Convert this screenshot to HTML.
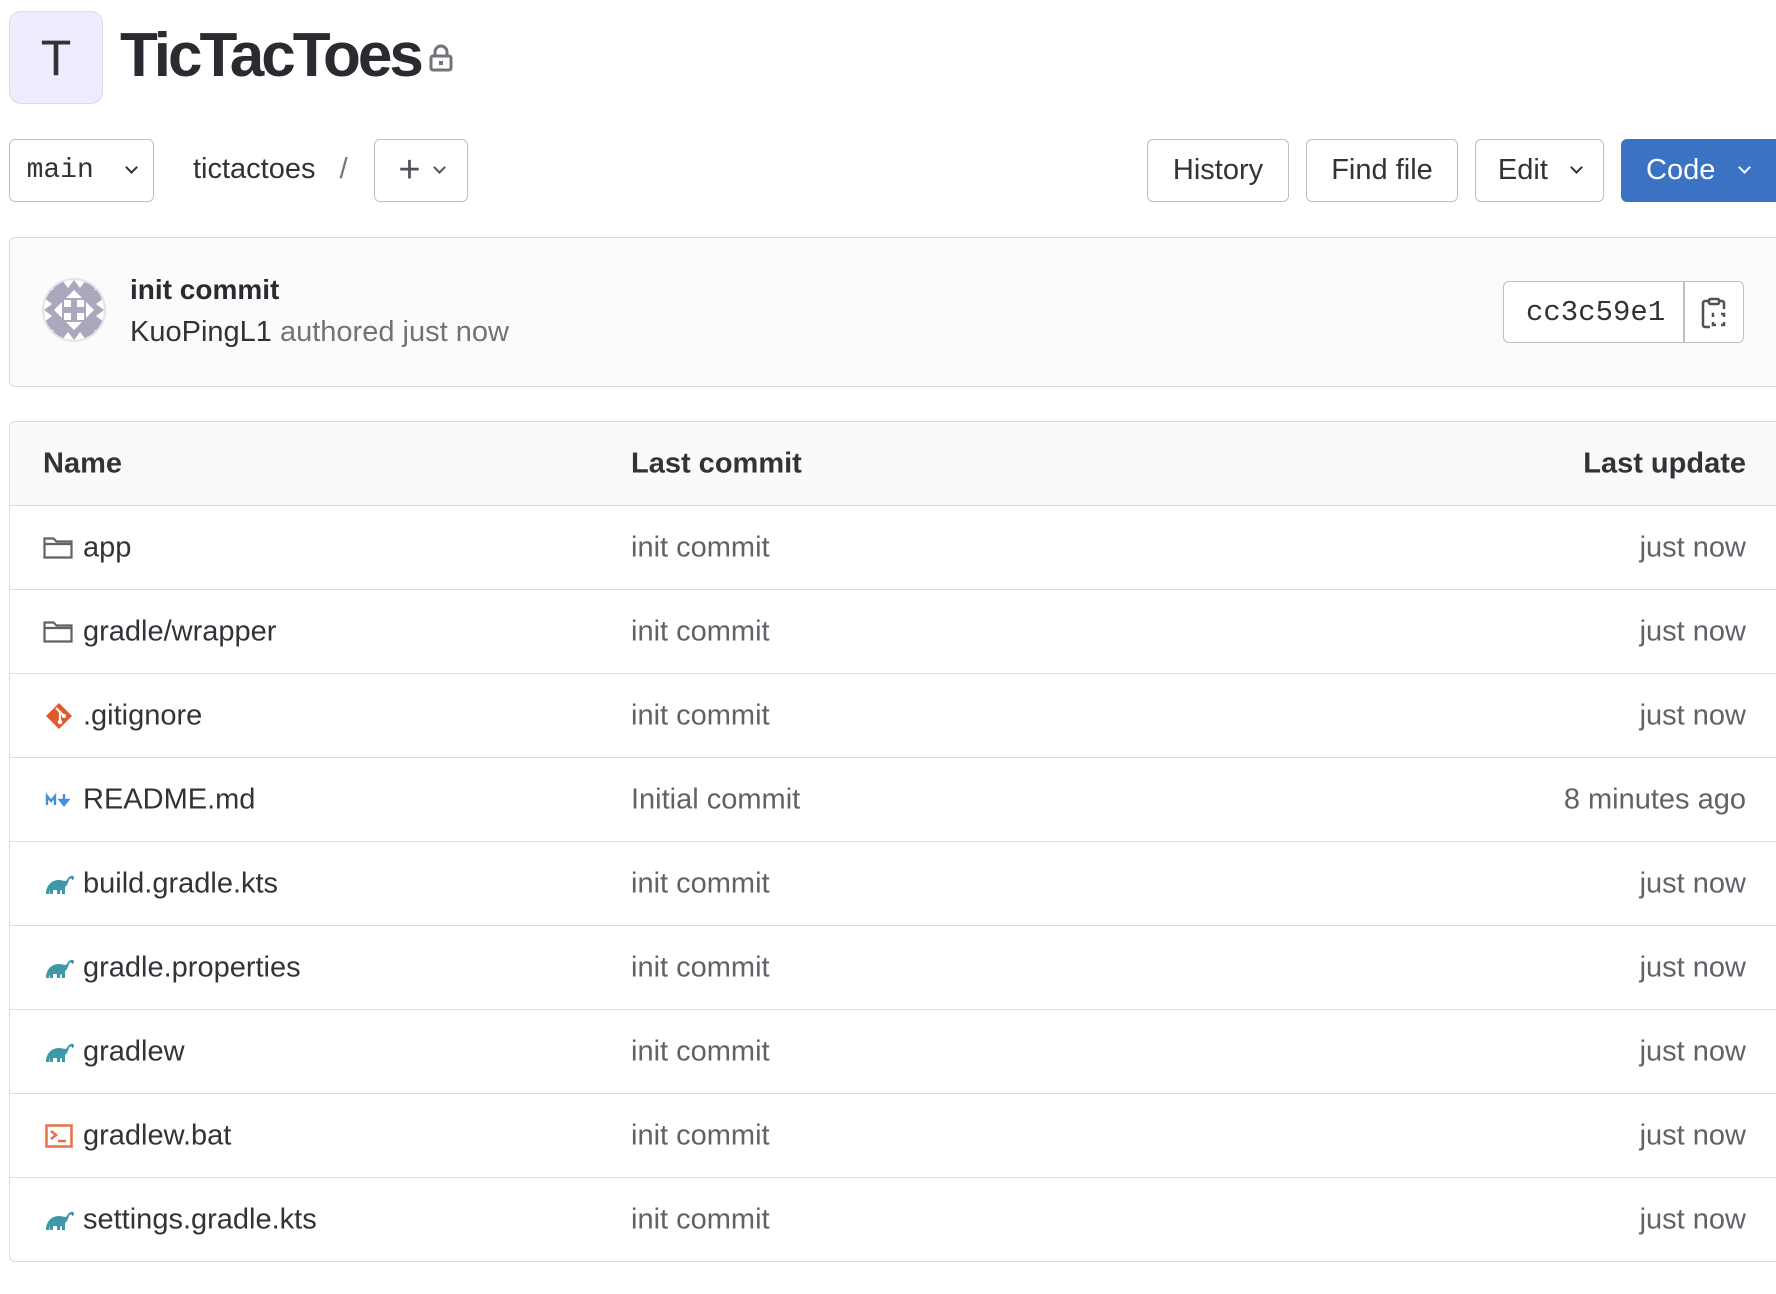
<!DOCTYPE html>
<html><head><meta charset="utf-8"><style>
*{box-sizing:border-box;margin:0;padding:0}
body{width:1776px;height:1294px;background:#fff;font-family:"Liberation Sans",sans-serif;color:#333238;position:relative;overflow:hidden}
.abs{position:absolute}
.btn{position:absolute;top:139px;height:63px;border:1.5px solid #bfbfc3;border-radius:6px;background:#fff;font-size:29px;display:flex;align-items:center;justify-content:center;color:#333238}
.chev{display:inline-block;width:10px;height:10px;border-right:2px solid currentColor;border-bottom:2px solid currentColor;transform:rotate(45deg);margin-top:-6px}
.table{position:absolute;left:9px;top:421px;width:1800px;border:1.5px solid #dcdcde;border-radius:6px;overflow:hidden}
.row{height:84px;border-top:1.5px solid #dcdcde;position:relative;font-size:29px}
.row.h{border-top:none;height:83px;background:#fafafb;font-weight:bold}
.row span{position:absolute;top:50%;transform:translateY(-50%)}
.n{left:73px;color:#333238}
.c{left:621px;color:#626168}
.u{left:1180px;width:556px;text-align:right;color:#626168}
.h .n{left:33px}.h .c,.h .u{color:#333238}
.ic{position:absolute;left:33px;top:50%;transform:translateY(-50%)}
</style></head><body>
<div class="abs" style="left:9px;top:11px;width:94px;height:93px;background:#eeedfd;border:1.5px solid #dcdaf3;border-radius:12px;font-size:50px;display:flex;align-items:center;justify-content:center;color:#333238">T</div>
<div class="abs" style="left:120px;top:20px;font-size:62px;font-weight:bold;letter-spacing:-3px;color:#2b2a30">TicTacToes</div>
<svg class="abs" style="left:428px;top:44px" width="26" height="28" viewBox="0 0 26 28"><rect x="3" y="12" width="20" height="14" rx="2" fill="none" stroke="#737278" stroke-width="3"/><path d="M7 12V8a6 6 0 0 1 12 0v4" fill="none" stroke="#737278" stroke-width="3"/><rect x="11" y="17" width="4" height="4" fill="#737278"/></svg>

<div class="btn" style="left:9px;width:145px;font-family:'Liberation Mono',monospace;font-size:28px">main&nbsp;&nbsp;<span class="chev" style="width:9px;height:9px"></span></div>
<div class="abs" style="left:193px;top:153px;font-size:29px">tictactoes&nbsp;&nbsp;&nbsp;<span style="color:#737278">/</span></div>
<div class="btn" style="left:374px;width:94px;color:#535158"><span style="font-size:38px;font-weight:300;margin-right:14px">+</span><span class="chev" style="width:9px;height:9px"></span></div>

<div class="btn" style="left:1147px;width:142px">History</div>
<div class="btn" style="left:1306px;width:152px">Find file</div>
<div class="btn" style="left:1475px;width:129px">Edit&nbsp;&nbsp;&nbsp;<span class="chev" style="width:9px;height:9px"></span></div>
<div class="btn" style="left:1621px;width:170px;background:#3b72c4;border-color:#3b72c4;color:#fff;justify-content:flex-start;padding-left:24px">Code&nbsp;&nbsp;&nbsp;<span class="chev" style="width:9px;height:9px"></span></div>

<div class="abs" style="left:9px;top:237px;width:1800px;height:150px;background:#fbfbfc;border:1.5px solid #dcdcde;border-radius:6px"></div>
<svg class="abs" style="left:42px;top:278px" width="64" height="64" viewBox="0 0 64 64"><defs><clipPath id="cc"><circle cx="32" cy="32" r="30"/></clipPath></defs><circle cx="32" cy="32" r="31" fill="#fff" stroke="#e4e4e8" stroke-width="2"/><g clip-path="url(#cc)" fill="#a9a8bd"><path d="M2 2h60v60H2z"/><g fill="#fff"><path d="M12 32l8-8v16zM52 32l-8-8v16zM32 12l-8 8h16zM32 52l-8-8h16z"/><rect x="22" y="22" width="7" height="7"/><rect x="35" y="22" width="7" height="7"/><rect x="22" y="35" width="7" height="7"/><rect x="35" y="35" width="7" height="7"/><path d="M2 2l10 10H2zM62 2L52 12h10zM2 62l10-10H2zM62 62L52 52h10z"/><path d="M20 2l6 8 6-8zM32 2l6 8 6-8zM20 62l6-8 6 8zM32 62l6-8 6 8zM2 20l8 6-8 6zM2 32l8 6-8 6zM62 20l-8 6 8 6zM62 32l-8 6 8 6z"/></g></g></svg>
<div class="abs" style="left:130px;top:274px;font-size:28px;font-weight:bold;color:#2b2a30">init commit</div>
<div class="abs" style="left:130px;top:316px;font-size:29px;color:#333238">KuoPingL1 <span style="color:#737278">authored just now</span></div>
<div class="abs" style="left:1503px;top:281px;width:241px;height:62px;border:1.5px solid #bfbfc3;border-radius:6px;background:#fff"></div>
<div class="abs" style="left:1683px;top:282px;width:1.5px;height:60px;background:#bfbfc3"></div>
<div class="abs" style="left:1526px;top:296px;font-family:'Liberation Mono',monospace;font-size:29px;color:#333238">cc3c59e1</div>
<svg class="abs" style="left:1700px;top:296px" width="28" height="34" viewBox="0 0 28 34"><path d="M9 5H5a2 2 0 0 0-2 2v22a2 2 0 0 0 2 2h5" fill="none" stroke="#535158" stroke-width="2.5"/><path d="M19 5h3a2 2 0 0 1 2 2v6" fill="none" stroke="#535158" stroke-width="2.5"/><rect x="9" y="3" width="10" height="5" rx="1.5" fill="none" stroke="#535158" stroke-width="2.5"/><path d="M14 18h-1v3M13 26v3h3M21 29h3v-3M24 21v-3h-3" fill="none" stroke="#535158" stroke-width="2.5"/></svg>

<div class="table">
<div class="row h"><span class="n">Name</span><span class="c">Last commit</span><span class="u">Last update</span></div>
<div class="row"><svg class="ic" width="30" height="24" viewBox="0 0 30 24"><path d="M1.5 2.5h9l3 3h15v16h-27z M1.5 8h27" fill="none" stroke="#626168" stroke-width="2.2"/></svg><span class="n">app</span><span class="c">init commit</span><span class="u">just now</span></div>
<div class="row"><svg class="ic" width="30" height="24" viewBox="0 0 30 24"><path d="M1.5 2.5h9l3 3h15v16h-27z M1.5 8h27" fill="none" stroke="#626168" stroke-width="2.2"/></svg><span class="n">gradle/wrapper</span><span class="c">init commit</span><span class="u">just now</span></div>
<div class="row"><svg class="ic" style="left:35px" width="28" height="28" viewBox="0 0 28 28"><path d="M14 1l13 13-13 13L1 14z" fill="#e05a2b"/><path d="M11 6l4 4v10M15 10l4 4" stroke="#fff" stroke-width="2.2" fill="none"/><circle cx="15" cy="20" r="2.3" fill="#fff"/><circle cx="19" cy="14" r="2" fill="#fff"/></svg><span class="n">.gitignore</span><span class="c">init commit</span><span class="u">just now</span></div>
<div class="row"><svg class="ic" style="left:35px" width="28" height="16" viewBox="0 0 28 16"><path d="M2 13V4l4 5 4-5v9" fill="none" stroke="#428fdc" stroke-width="2.4"/><path d="M19 2v8M15 8l4 5 4-5z" fill="#428fdc" stroke="#428fdc" stroke-width="2.4"/></svg><span class="n">README.md</span><span class="c">Initial commit</span><span class="u">8 minutes ago</span></div>
<div class="row"><svg class="ic" style="left:35px" width="30" height="22" viewBox="0 0 30 22"><path d="M1 21c0-8 5-14 13-14 4 0 6 2 8 0 1-3 4-5 6-4 2 1 1 4-1 4 0-2-2-2-3 0-1 3-2 6-4 7v7h-3v-4l-2 1v3h-3v-4H8v4H5v-4l-1 4z" fill="#3f98a6"/></svg><span class="n">build.gradle.kts</span><span class="c">init commit</span><span class="u">just now</span></div>
<div class="row"><svg class="ic" style="left:35px" width="30" height="22" viewBox="0 0 30 22"><path d="M1 21c0-8 5-14 13-14 4 0 6 2 8 0 1-3 4-5 6-4 2 1 1 4-1 4 0-2-2-2-3 0-1 3-2 6-4 7v7h-3v-4l-2 1v3h-3v-4H8v4H5v-4l-1 4z" fill="#3f98a6"/></svg><span class="n">gradle.properties</span><span class="c">init commit</span><span class="u">just now</span></div>
<div class="row"><svg class="ic" style="left:35px" width="30" height="22" viewBox="0 0 30 22"><path d="M1 21c0-8 5-14 13-14 4 0 6 2 8 0 1-3 4-5 6-4 2 1 1 4-1 4 0-2-2-2-3 0-1 3-2 6-4 7v7h-3v-4l-2 1v3h-3v-4H8v4H5v-4l-1 4z" fill="#3f98a6"/></svg><span class="n">gradlew</span><span class="c">init commit</span><span class="u">just now</span></div>
<div class="row"><svg class="ic" style="left:35px" width="28" height="24" viewBox="0 0 28 24"><rect x="1.5" y="1.5" width="25" height="21" fill="none" stroke="#e8704a" stroke-width="2.5"/><path d="M6 7l5 4-5 4M13 17h8" fill="none" stroke="#e8704a" stroke-width="2.5"/></svg><span class="n">gradlew.bat</span><span class="c">init commit</span><span class="u">just now</span></div>
<div class="row"><svg class="ic" style="left:35px" width="30" height="22" viewBox="0 0 30 22"><path d="M1 21c0-8 5-14 13-14 4 0 6 2 8 0 1-3 4-5 6-4 2 1 1 4-1 4 0-2-2-2-3 0-1 3-2 6-4 7v7h-3v-4l-2 1v3h-3v-4H8v4H5v-4l-1 4z" fill="#3f98a6"/></svg><span class="n">settings.gradle.kts</span><span class="c">init commit</span><span class="u">just now</span></div>
</div>
</body></html>
